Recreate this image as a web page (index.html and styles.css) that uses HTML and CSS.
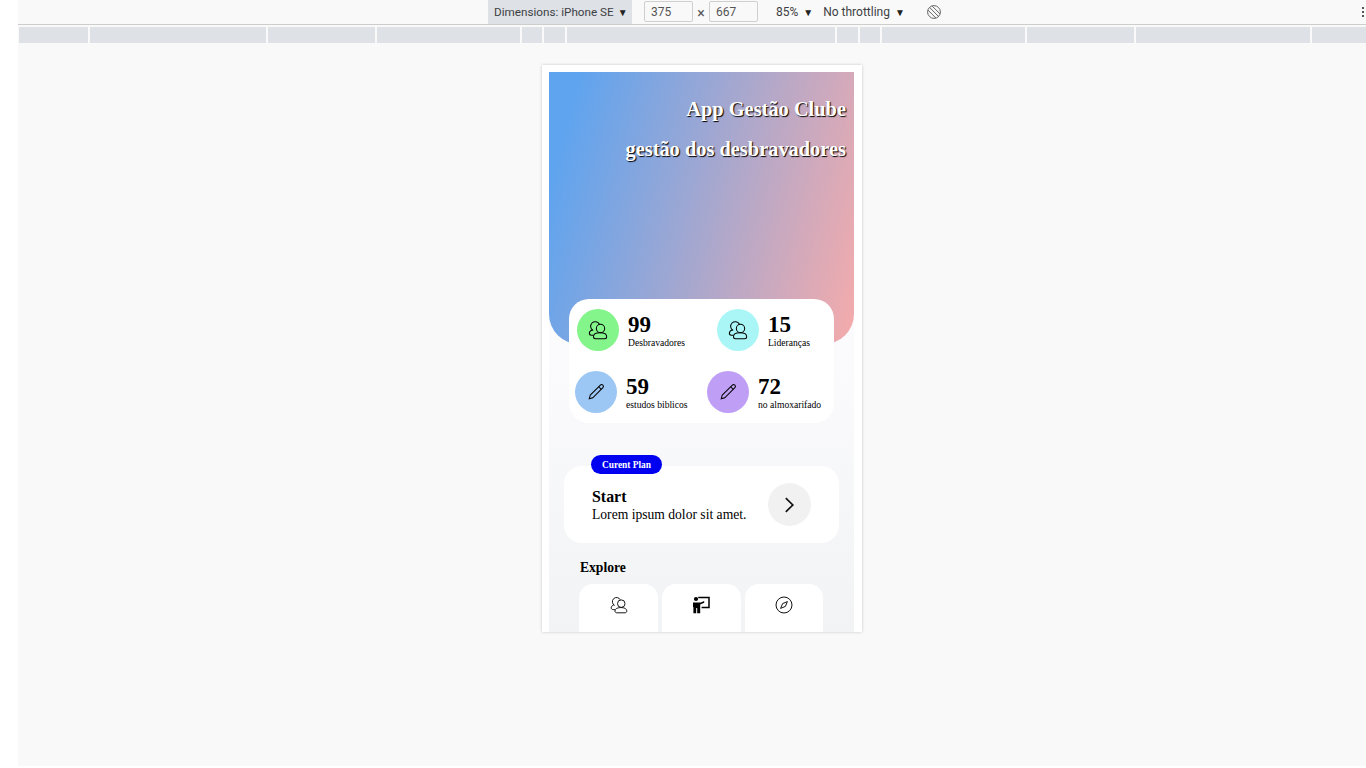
FILE: index.html
```html
<!DOCTYPE html>
<html lang="pt">
<head>
  <meta charset="UTF-8" />
  <meta name="viewport" content="width=device-width, initial-scale=1.0" />
  <title>App Gestão Clube</title>
  <link rel="stylesheet" href="styles.css">
</head>
<body>
  <svg class="defs" width="0" height="0" aria-hidden="true">
    <symbol id="i-users" viewBox="0 0 24 24">
      <path d="M6.2 12.6A5.6 5.6 0 1 1 13.8 5.2" />
      <circle cx="15" cy="10.2" r="5" />
      <path d="M5.4 11.6C3 12.6 1.6 14 1.6 15.8C1.6 17.2 2.8 18.2 4.2 18.2H6.6" />
      <path d="M6.6 20C6.6 17 10 15.4 14.4 15.4C18.8 15.4 22.4 17 22.4 20C22.4 21.4 21.4 22.4 20 22.4H9C7.6 22.4 6.6 21.4 6.6 20Z" />
    </symbol>
    <symbol id="i-pencil" viewBox="0 0 24 24">
      <path d="M4.3 16.3L17.8 2.8A2.4 2.4 0 0 1 21.2 6.2L7.7 19.7L3 21Z" />
      <path d="M15.6 5L19 8.4" />
    </symbol>
  </svg>

  <main class="devtools">
    <header class="toolbar">
      <div class="chip">Dimensions: iPhone SE <span class="caret">▼</span></div>
      <div class="size-box box-w">375</div>
      <span class="times">×</span>
      <div class="size-box">667</div>
      <div class="tool tool-zoom">85% <span class="caret">▼</span></div>
      <div class="tool tool-throttle">No throttling <span class="caret">▼</span></div>
      <svg class="rotate" viewBox="0 0 16 16" width="16" height="16">
        <circle cx="8" cy="8" r="6.4" />
        <path d="M3.6 3.4L12.6 12.6M1.9 6L10 14.1M6 1.9L14.1 10" />
      </svg>
      <div class="dots"><i></i><i></i><i></i></div>
    </header>

    <div class="ruler">
      <span></span><span></span><span></span><span></span><span></span><span></span><span></span>
      <span></span><span></span><span></span><span></span><span></span><span></span>
    </div>

    <section class="frame">
      <div class="screen">
        <div class="hero">
          <h1>App Gestão Clube</h1>
          <h1>gestão dos desbravadores</h1>
        </div>

        <div class="stats">
          <div class="stat-row row-one">
            <div class="stat">
              <div class="circle green"><svg class="line-icon"><use href="#i-users" /></svg></div>
              <div class="stat-text"><b>99</b><small>Desbravadores</small></div>
            </div>
            <div class="stat">
              <div class="circle cyan"><svg class="line-icon"><use href="#i-users" /></svg></div>
              <div class="stat-text"><b>15</b><small>Lideranças</small></div>
            </div>
          </div>
          <div class="stat-row row-two">
            <div class="stat">
              <div class="circle blue"><svg class="line-icon pencil"><use href="#i-pencil" /></svg></div>
              <div class="stat-text"><b>59</b><small>estudos biblicos</small></div>
            </div>
            <div class="stat">
              <div class="circle purple"><svg class="line-icon pencil"><use href="#i-pencil" /></svg></div>
              <div class="stat-text"><b>72</b><small>no almoxarifado</small></div>
            </div>
          </div>
        </div>

        <div class="plan">
          <span class="badge">Curent Plan</span>
          <div class="plan-text">
            <strong>Start</strong>
            <p>Lorem ipsum dolor sit amet.</p>
          </div>
          <div class="go">
            <svg viewBox="0 0 16 16" width="16" height="16"><path d="M3.8 1.2L10.8 8L3.8 14.8" /></svg>
          </div>
        </div>

        <h2>Explore</h2>
        <div class="tiles">
          <div class="tile"><svg class="tile-icon"><use href="#i-users" /></svg></div>
          <div class="tile">
            <svg class="teacher" viewBox="0 0 18 18" width="18" height="18">
              <circle cx="3" cy="3" r="2.1" />
              <path d="M0 6.4H7.8L11.2 5V6.8L7.2 8.4V17.2H4.2V12H3.2V17.2H0.4V11H0Z" />
              <path class="board" d="M5.2 1.4H16V11.6H8.6" />
            </svg>
          </div>
          <div class="tile">
            <svg class="compass" viewBox="0 0 18 18" width="18" height="18">
              <circle cx="9" cy="9" r="8" />
              <path d="M12.4 5.6L10.4 10.4L5.6 12.4L7.6 7.6Z" />
            </svg>
          </div>
        </div>
      </div>
    </section>
  </main>
</body>
</html>
```

FILE: styles.css
```css
* {
  box-sizing: border-box;
}
html, body {
  height: 100%;
}
body {
  margin: 0;
  background-color: #ffffff;
  font-family: "Liberation Serif", "Times New Roman", serif;
  color: #000000;
  overflow: hidden;
}
.defs {
  position: absolute;
}
.devtools {
  margin-left: 18px;
  height: 766px;
  background-color: #f9f9f9;
}

/* device toolbar */
.toolbar {
  display: flex;
  align-items: center;
  height: 25px;
  padding-left: 470px;
  border-bottom: 1px solid #cdcdcd;
  font-family: Roboto, "Noto Sans", sans-serif;
  font-size: 12px;
  color: #3c4043;
}
.chip {
  display: flex;
  align-items: center;
  gap: 4px;
  width: 144px;
  height: 24px;
  padding-left: 6px;
  background-color: #dee1e6;
  font-size: 11.7px;
  white-space: nowrap;
}
.caret {
  font-size: 10px;
  color: #222222;
}
.size-box {
  width: 49px;
  height: 21px;
  margin-bottom: 2px;
  padding: 3px 6px;
  border: 1px solid #cfcfcf;
  border-radius: 2px;
  color: #555555;
}
.box-w {
  margin-left: 12px;
}
.times {
  width: 16px;
  padding-top: 2px;
  font-size: 14px;
  text-align: center;
  color: #555555;
}
.tool {
  display: flex;
  align-items: center;
  gap: 5px;
  white-space: nowrap;
}
.tool-zoom {
  margin-left: 18px;
}
.tool-throttle {
  margin-left: 10px;
}
.rotate {
  margin-left: 21px;
  fill: none;
  stroke: #666666;
  stroke-width: 1;
}
.dots {
  display: flex;
  flex-direction: column;
  gap: 2px;
  margin-left: auto;
  margin-right: 2px;
}
.dots i {
  width: 2px;
  height: 2px;
  background-color: #555555;
}

/* media query ruler */
.ruler {
  display: grid;
  grid-template-columns: 69px 176px 107px 143px 20px 21px 268px 21px 20px 143px 107px 174px 1fr;
  gap: 2px;
  height: 16px;
  margin-top: 2px;
  padding-left: 1px;
}
.ruler span {
  background-color: #dee1e6;
}

/* emulated phone */
.frame {
  width: 320px;
  height: 567px;
  margin: 22px 0 0 524px;
  padding: 7px 8px 0 7px;
  background-color: #ffffff;
  box-shadow: 0 0 3px rgba(0, 0, 0, 0.2);
  overflow: hidden;
}
.screen {
  height: 560px;
  background: linear-gradient(180deg, #fbfbfd 50%, #f2f3f5 100%);
}
.hero {
  height: 272px;
  padding-top: 27px;
  padding-right: 8px;
  border-radius: 0 0 30px 30px;
  background: linear-gradient(105deg, #5fa4ef 8%, #f5abab 100%);
  color: #ffffff;
  text-align: right;
}
.hero h1 {
  margin: 0 0 19px;
  font-size: 20.4px;
  line-height: 21px;
  text-shadow: 1px 1px 1px #000000;
}

/* stats card */
.stats {
  width: 265px;
  height: 124px;
  margin: -45px 0 0 20px;
  position: relative;
  padding-top: 10px;
  background-color: #ffffff;
  border-radius: 20px;
}
.stat-row {
  display: flex;
}
.row-one {
  padding-left: 8px;
}
.row-one .stat {
  flex: 0 0 140px;
}
.row-two {
  margin-top: 20px;
  padding-left: 6px;
}
.row-two .stat {
  flex: 0 0 132px;
}
.stat {
  display: flex;
  align-items: center;
  gap: 9px;
}
.stat-text {
  padding-top: 2px;
}
.stat b {
  display: block;
  font-size: 23px;
  line-height: 24px;
}
.stat small {
  display: block;
  font-size: 9.6px;
  line-height: 12px;
  white-space: nowrap;
}
.circle {
  display: flex;
  align-items: center;
  justify-content: center;
  flex: none;
  width: 42px;
  height: 42px;
  border-radius: 50%;
}
.green {
  background-color: #84f58a;
}
.cyan {
  background-color: #aaf6f6;
}
.blue {
  background-color: #9cc6f4;
}
.purple {
  background-color: #bf9ff5;
}
.line-icon {
  width: 20px;
  height: 20px;
  fill: none;
  stroke: #000000;
  stroke-width: 1.25;
}
.pencil {
  width: 18px;
  height: 18px;
  stroke-width: 1.35;
}

/* current plan */
.plan {
  position: relative;
  display: flex;
  align-items: center;
  justify-content: space-between;
  width: 275px;
  height: 77px;
  margin: 43px 0 0 15px;
  padding: 0 28px;
  background-color: #ffffff;
  border-radius: 18px;
}
.badge {
  position: absolute;
  top: -11px;
  left: 27px;
  width: 71px;
  height: 19px;
  background-color: #0000f0;
  border-radius: 10px;
  color: #ffffff;
  font-size: 9.4px;
  font-weight: bold;
  line-height: 20px;
  text-align: center;
}
.plan-text {
  padding-top: 4px;
}
.plan-text strong {
  display: block;
  font-size: 15.9px;
  line-height: 16px;
}
.plan-text p {
  margin: 0;
  font-size: 13.6px;
  line-height: 19px;
  white-space: nowrap;
}
.go {
  display: flex;
  align-items: center;
  justify-content: center;
  flex: none;
  width: 43px;
  height: 43px;
  background-color: #f1f1f1;
  border-radius: 50%;
}
.go svg {
  fill: none;
  stroke: #111111;
  stroke-width: 1.7;
}

/* explore */
h2 {
  margin: 17px 0 8px 31px;
  font-size: 13.6px;
  line-height: 16px;
}
.tiles {
  display: grid;
  grid-template-columns: 79px 79px 78px;
  gap: 4px;
  margin-left: 30px;
}
.tile {
  display: flex;
  justify-content: center;
  height: 60px;
  padding-top: 12px;
  background-color: #ffffff;
  border-radius: 14px 14px 0 0;
}
.tile-icon {
  width: 18px;
  height: 18px;
  fill: none;
  stroke: #111111;
  stroke-width: 1.3;
}
.teacher {
  fill: #000000;
}
.teacher .board {
  fill: none;
  stroke: #000000;
  stroke-width: 1.5;
}
.compass {
  fill: none;
  stroke: #111111;
  stroke-width: 1;
}
```
